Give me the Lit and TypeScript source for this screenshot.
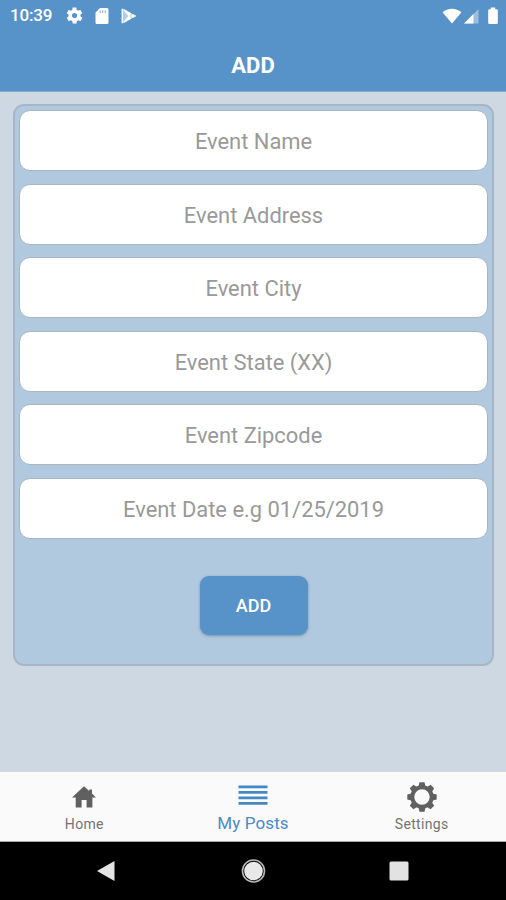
import { LitElement, html, css, svg } from "lit";
import { customElement, property } from "lit/decorators.js";

const FIELDS = [
  "Event Name",
  "Event Address",
  "Event City",
  "Event State (XX)",
  "Event Zipcode",
  "Event Date e.g 01/25/2019",
];

const GEAR_TEETH = [0, 45, 90, 135, 180, 225, 270, 315];

@customElement("status-bar")
class StatusBar extends LitElement {
  static styles = css`
    :host { display: flex; align-items: center; height: 31px; padding: 0 7px 0 10px; color: #fff; }
    .time { font: 500 17px/31px Roboto, sans-serif; width: 55px; letter-spacing: -0.15px; }
    .left, .right { display: flex; align-items: center; }
    .left { flex: 1; gap: 9px; }
    .right { gap: 2px; }
    svg { display: block; }
    .battery { margin-left: 6px; }
  `;
  render() {
    return html`
      <span class="time">10:39</span>
      <div class="left">
        <svg width="19" height="19" viewBox="0 0 24 24" fill="#fff"><path d="M19.4 13c.1-.3.1-.7.1-1s0-.7-.1-1l2.1-1.700c.2-.1.2-.4.1-.6l-2-3.500c-.1-.2-.4-.3-.6-.2l-2.500 1c-.5-.4-1.100-.7-1.700-1l-.4-2.600c0-.2-.2-.4-.5-.4h-4c-.2 0-.5.2-.5.4L9.200 5c-.6.300-1.200.6-1.700 1L5 5c-.2-.1-.5 0-.6.2l-2 3.500c-.1.2-.1.400.1.6L4.600 11c0 .3-.1.700-.1 1s0 .7.100 1l-2.100 1.700c-.2.1-.2.400-.1.600l2 3.500c.1.2.4.300.6.2l2.500-1c.5.4 1.100.7 1.700 1l.4 2.600c0 .2.300.4.5.4h4c.2 0 .5-.2.500-.4l.4-2.600c.6-.3 1.200-.6 1.700-1l2.500 1c.2.1.5 0 .6-.2l2-3.500c.1-.2.100-.5-.1-.6zM12 15.200a3.200 3.200 0 1 1 0-6.400 3.200 3.200 0 0 1 0 6.400z"/></svg>
        <svg width="18" height="18" viewBox="0 0 18 18"><path fill="#fff" d="M7 1h7a1.500 1.500 0 0 1 1.500 1.500v13a1.500 1.500 0 0 1-1.500 1.500H4A1.500 1.500 0 0 1 2.500 15.500v-10z"/><path d="M7.200 3.500v2.500M9.700 3.500v2.500M12.200 3.500v2.500" stroke="#5793c9" stroke-width=".8"/></svg>
        <svg width="18" height="18" viewBox="0 0 18 18"><path fill="#fff" fill-opacity=".55" d="M2 2l14 7-14 7z"/><path fill="#fff" d="M3 1.600l8.800 4.900-2.200 2zM3 16.400l8.800-4.900-2.200-2zM12.700 7l3.600 2-3.600 2-2.100-2z"/><path d="M2.200 1.800v14.400M3.600 2.500L9.500 9l-5.900 6.500" stroke="#fff" stroke-width="1.300" fill="none"/></svg>
      </div>
      <div class="right">
        <svg width="20" height="16" viewBox="0 0 20 16"><path fill="#fff" d="M.5 4.300C5.700-.4 14.300-.4 19.500 4.300L10 15.500z"/></svg>
        <svg width="15" height="16" viewBox="0 0 15 16"><path fill="#fff" fill-opacity=".4" d="M0 15.500L14.500 1v14.500z"/><path fill="#fff" d="M0 15.500L9.500 6v9.500z"/></svg>
        <svg class="battery" width="12" height="18" viewBox="0 0 12 18"><path fill="#fff" d="M3.800.5h4.400v1.800h1.300q1.300 0 1.300 1.300v12.200q0 1.300-1.300 1.300h-7q-1.300 0-1.300-1.300V3.600q0-1.300 1.300-1.300h1.300z"/></svg>
      </div>
    `;
  }
}

@customElement("event-form")
class EventForm extends LitElement {
  static styles = css`
    :host {
      display: flex; flex-direction: column; align-items: center; gap: 12.600px;
      box-sizing: border-box; height: 562px; margin: 12px 12px 0 13px; padding: 4px 4px 0;
      background: #b1c9de; border: 2px solid #a7b6c5; border-radius: 11px;
    }
    .field {
      box-sizing: border-box; align-self: stretch; height: 61px; flex: none;
      background: #fff; border: 1px solid #aab5c0; border-radius: 11px;
      color: #999; font: 400 21.900px/61px Roboto, sans-serif;
      text-align: center; white-space: nowrap;
    }
    .submit {
      flex: none; width: 108px; height: 59px; margin-top: 24px; padding: 0; border: 0;
      border-radius: 9px; background: #5793c9; color: #fff; font: 500 18px/60px Roboto, sans-serif;
      box-shadow: 0 1px 3px rgba(50, 80, 110, 0.45);
    }
  `;
  render() {
    return html`
      ${FIELDS.map((name) => html`<div class="field">${name}</div>`)}
      <button class="submit">ADD</button>
    `;
  }
}

@customElement("tab-item")
class TabItem extends LitElement {
  @property() icon = "home";
  @property() label = "";
  @property({ type: Boolean, reflect: true }) active = false;
  static styles = css`
    :host { display: flex; flex-direction: column; align-items: center; flex: 1; color: #737373; }
    .icon { display: flex; align-items: center; justify-content: center; height: 32px; margin-top: 9px; }
    .label { font: 400 14px/20px Roboto, sans-serif; letter-spacing: 0.35px; margin-top: 1px; }
    :host([active]) { color: #4a8ac6; }
    :host([active]) .label { font-size: 17px; letter-spacing: 0.1px; margin-top: 0; }
    svg { display: block; }
    .lift { margin-bottom: 4px; }
  `;
  glyph() {
    if (this.icon === "home")
      return html`<svg width="24" height="22" viewBox="0 0 24 22"><path fill="#606060" d="M12 .3L17.300 5V3.600h2.700v3.900L24 11.600H20.400V21.500H14.600V14H9.600V21.500H3.700V11.600H0z"/></svg>`;
    if (this.icon === "list")
      return html`<svg class="lift" width="30" height="20" viewBox="0 0 30 20"><path stroke="#4587c4" stroke-width="2.800" d="M.5 1.800h29M.5 7.300h29M.5 12.800h29M.5 18.300h29"/></svg>`;
    return html`<svg width="30" height="30" viewBox="-15 -15 30 30">
      <circle r="9.700" fill="none" stroke="#606060" stroke-width="4"/>
      ${GEAR_TEETH.map((a) => svg`<path fill="#606060" transform="rotate(${a})" d="M-3.500-10.500L-2.500-14.700H2.500L3.500-10.500z"/>`)}
    </svg>`;
  }
  render() {
    return html`<div class="icon">${this.glyph()}</div><span class="label">${this.label}</span>`;
  }
}

@customElement("system-nav")
class SystemNav extends LitElement {
  static styles = css`
    :host { display: flex; justify-content: space-between; align-items: center; box-sizing: border-box; height: 58px; padding: 0 96px 0 95px; background: #000; }
    svg { display: block; }
  `;
  render() {
    return html`
      <svg width="22" height="24" viewBox="0 0 22 24"><path fill="#e4e4e4" d="M19.500 2v20L2 12z"/></svg>
      <svg width="26" height="26" viewBox="0 0 26 26"><circle cx="13.500" cy="13" r="11" fill="none" stroke="#b8b8b8" stroke-width="1.600"/><circle cx="13.500" cy="13" r="9.300" fill="#e8e8e8"/></svg>
      <svg width="22" height="22" viewBox="0 0 22 22"><rect x="1.500" y="1.500" width="19" height="19" rx="1.500" fill="#e2e2e2"/></svg>
    `;
  }
}

@customElement("app-root")
class AppRoot extends LitElement {
  static styles = css`
    :host { display: flex; flex-direction: column; width: 506px; height: 900px; overflow: hidden; background: #ced8e2; font-family: Roboto, sans-serif; }
    .header { flex: none; box-sizing: border-box; height: 92px; background: #5793c9; border-bottom: 1px solid #86a9cb; }
    .title { margin: 0; text-align: center; color: #fff; font: 700 22px/69px Roboto, sans-serif; height: 60px; }
    .content { flex: 1; }
    .tabs { display: flex; box-sizing: border-box; height: 71px; background: #fafafa; border-top: 1px solid #d5dae0; border-bottom: 1px solid #aaa; }
  `;
  render() {
    return html`
      <header class="header">
        <status-bar></status-bar>
        <h1 class="title">ADD</h1>
      </header>
      <main class="content"><event-form></event-form></main>
      <nav class="tabs">
        <tab-item icon="home" label="Home"></tab-item>
        <tab-item icon="list" label="My Posts" active></tab-item>
        <tab-item icon="gear" label="Settings"></tab-item>
      </nav>
      <system-nav></system-nav>
    `;
  }
}
